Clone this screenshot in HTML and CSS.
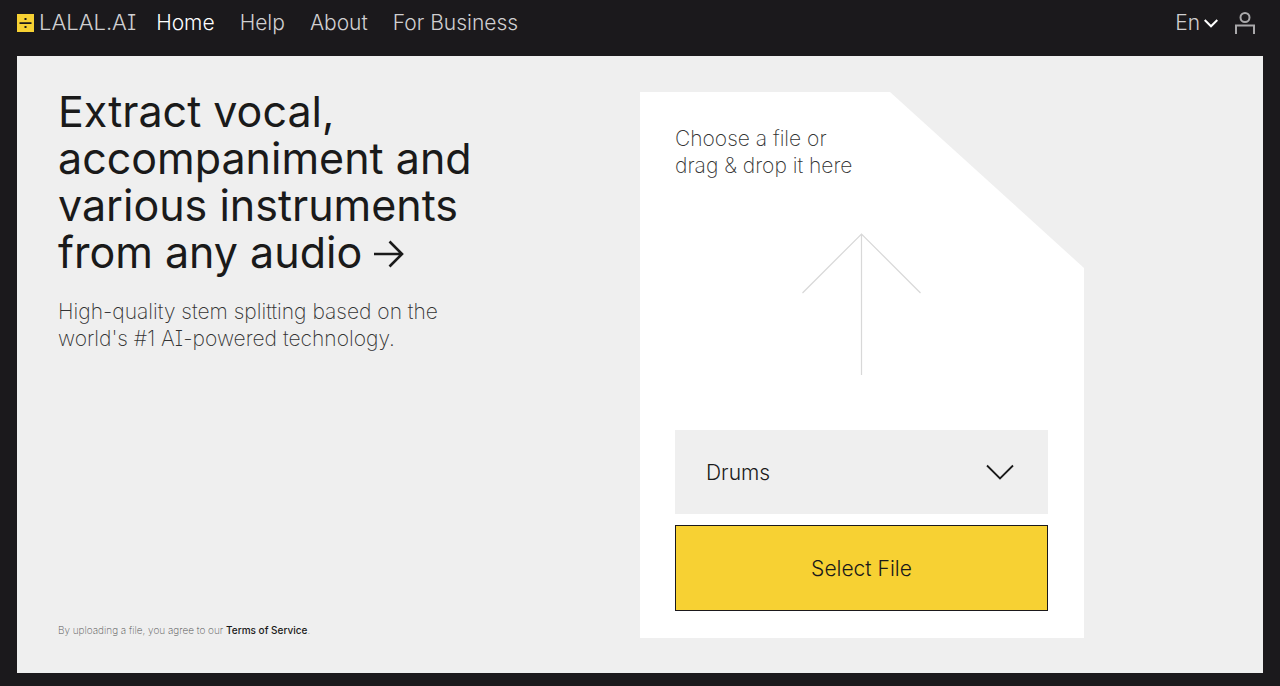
FILE: index.html
```
<!DOCTYPE html>
<html lang="en">
<head>
<meta charset="utf-8">
<meta name="viewport" content="width=device-width, initial-scale=1">
<title>LALAL.AI</title>
<link rel="stylesheet" href="styles.css">
</head>
<body class="page">
<header class="header">
  <a class="logo" href="#">
    <svg class="logo-mark" viewBox="0 0 18 18" aria-hidden="true">
      <path fill="#f7d133" d="M0 0h17v18H0z"/>
      <path fill="#1b191c" d="M2.500 8.200h12v1.800h-12zM7.500 4h2v2h-2zM7.500 12h2v2h-2z"/>
    </svg>
    <span class="logo-name">LALAL.AI</span>
  </a>
  <nav class="nav">
    <a class="nav-link nav-link-active" href="#">Home</a>
    <a class="nav-link" href="#">Help</a>
    <a class="nav-link" href="#">About</a>
    <a class="nav-link" href="#">For Business</a>
  </nav>
  <div class="tools">
    <button class="language" type="button">En
      <svg class="language-chevron" viewBox="0 0 14 10" aria-hidden="true"><path d="M.7 2l6.300 6.300L13.300 2" fill="none" stroke="currentColor" stroke-width="2"/></svg>
    </button>
    <button class="account" type="button" aria-label="Account">
      <svg class="account-icon" viewBox="0 0 22 22" aria-hidden="true"><g fill="none" stroke="currentColor" stroke-width="2"><circle cx="11" cy="5.500" r="4.500"/><path d="M2 22v-8.500h18V22"/></g></svg>
    </button>
  </div>
</header>
<main class="hero">
  <section class="intro">
    <h1 class="title">Extract vocal,<br>accompaniment and<br>various instruments<br>from any audio
      <svg class="title-arrow" viewBox="0 0 30 28" aria-hidden="true"><path d="M0 14h28M15.500 1.500L28 14 15.500 26.500" fill="none" stroke="currentColor" stroke-width="2.600"/></svg></h1>
    <p class="lead">High-quality stem splitting based on the<br>world's #1 AI-powered technology.</p>
    <p class="terms">By uploading a file, you agree to our <a class="terms-link" href="#">Terms of Service</a>.</p>
  </section>
  <section class="upload">
    <p class="hint">Choose a file or<br>drag &amp; drop it here</p>
    <svg class="upload-arrow" viewBox="0 0 120 143" aria-hidden="true"><path d="M59.500 142V1M.5 60l59-59 59 59" fill="none" stroke="#d8d8d8" stroke-width="1.200"/></svg>
    <div class="controls">
      <div class="stem">
        <select class="stem-select" aria-label="Stem">
          <option>Drums</option>
        </select>
        <svg class="stem-chevron" viewBox="0 0 28 16" aria-hidden="true"><path d="M1 1.500l13 13 13-13" fill="none" stroke="currentColor" stroke-width="1.800"/></svg>
      </div>
      <button class="select-file" type="button">Select File</button>
    </div>
  </section>
</main>
</body>
</html>
```

FILE: styles.css
```
* {
  box-sizing: border-box;
}

.page {
  display: flex;
  flex-direction: column;
  min-height: 100vh;
  margin: 0;
  background: #1b191c;
  color: #1a1a1a;
  font-family: Inter, "Liberation Sans", sans-serif;
  font-size: 21px;
  font-weight: 300;
  line-height: 27px;
}

.header {
  display: flex;
  align-items: center;
  padding: 9px 24px 20px 17px;
  color: #d0cfd1;
}

.logo {
  display: flex;
  align-items: center;
  gap: 4px;
  margin-right: 20px;
  color: inherit;
  font-size: 22px;
  text-decoration: none;
}

.logo-name {
  font-feature-settings: "cv08";
}

.logo-mark {
  width: 18px;
  height: 18px;
}

.nav {
  display: flex;
  gap: 25px;
}

.nav-link {
  color: inherit;
  text-decoration: none;
}

.nav-link-active {
  color: #ffffff;
}

.tools {
  display: flex;
  align-items: center;
  gap: 16px;
  margin-left: auto;
}

.language,
.account {
  display: flex;
  align-items: center;
  gap: 4px;
  padding: 0;
  border: 0;
  background: none;
  color: inherit;
  font: inherit;
}

.language-chevron {
  width: 14px;
  height: 10px;
  color: #ffffff;
}

.account-icon {
  width: 22px;
  height: 22px;
  color: #a9a8aa;
}

.hero {
  display: grid;
  flex: 1;
  grid-template-columns: 1fr 1fr;
  margin: 0 17px 13px;
  padding: 36px 0 35px;
  background: #efefef;
}

.intro {
  display: flex;
  flex-direction: column;
  padding-left: 41px;
}

.title {
  margin: -4px 0 22px;
  font-size: 43px;
  font-weight: 400;
  line-height: 47px;
}

.title-arrow {
  width: 30px;
  height: 28px;
  vertical-align: 0;
}

.lead {
  margin: 0;
  color: #333333;
  font-weight: 200;
  font-feature-settings: "cv08";
}

.terms {
  margin: auto 0 0;
  color: #555555;
  font-size: 10px;
  font-weight: 200;
  line-height: 15px;
}

.terms-link {
  color: #1a1a1a;
  font-weight: 500;
  text-decoration: none;
}

.upload {
  display: flex;
  flex-direction: column;
  justify-content: space-between;
  width: 100%;
  max-width: 444px;
  padding: 33px 36px 27px 35px;
  background: #ffffff;
  clip-path: polygon(0 0, 250px 0, 100% 176px, 100% 100%, 0 100%);
}

.hint {
  margin: 0;
  color: #333333;
  font-weight: 200;
}

.upload-arrow {
  align-self: center;
  width: 120px;
  height: 143px;
}

.controls {
  display: grid;
  gap: 11px;
}

.stem {
  display: grid;
  align-items: center;
}

.stem-select,
.stem-chevron {
  grid-area: 1 / 1;
}

.stem-select {
  width: 100%;
  height: 84px;
  padding: 0 70px 0 31px;
  border: 0;
  border-radius: 0;
  appearance: none;
  background: #efefef;
  color: #1a1a1a;
  font: inherit;
}

.stem-chevron {
  justify-self: end;
  width: 28px;
  height: 16px;
  margin-right: 34px;
  pointer-events: none;
}

.select-file {
  height: 86px;
  border: 1px solid #1b191c;
  background: #f7d133;
  color: #1a1a1a;
  font: inherit;
}
```
